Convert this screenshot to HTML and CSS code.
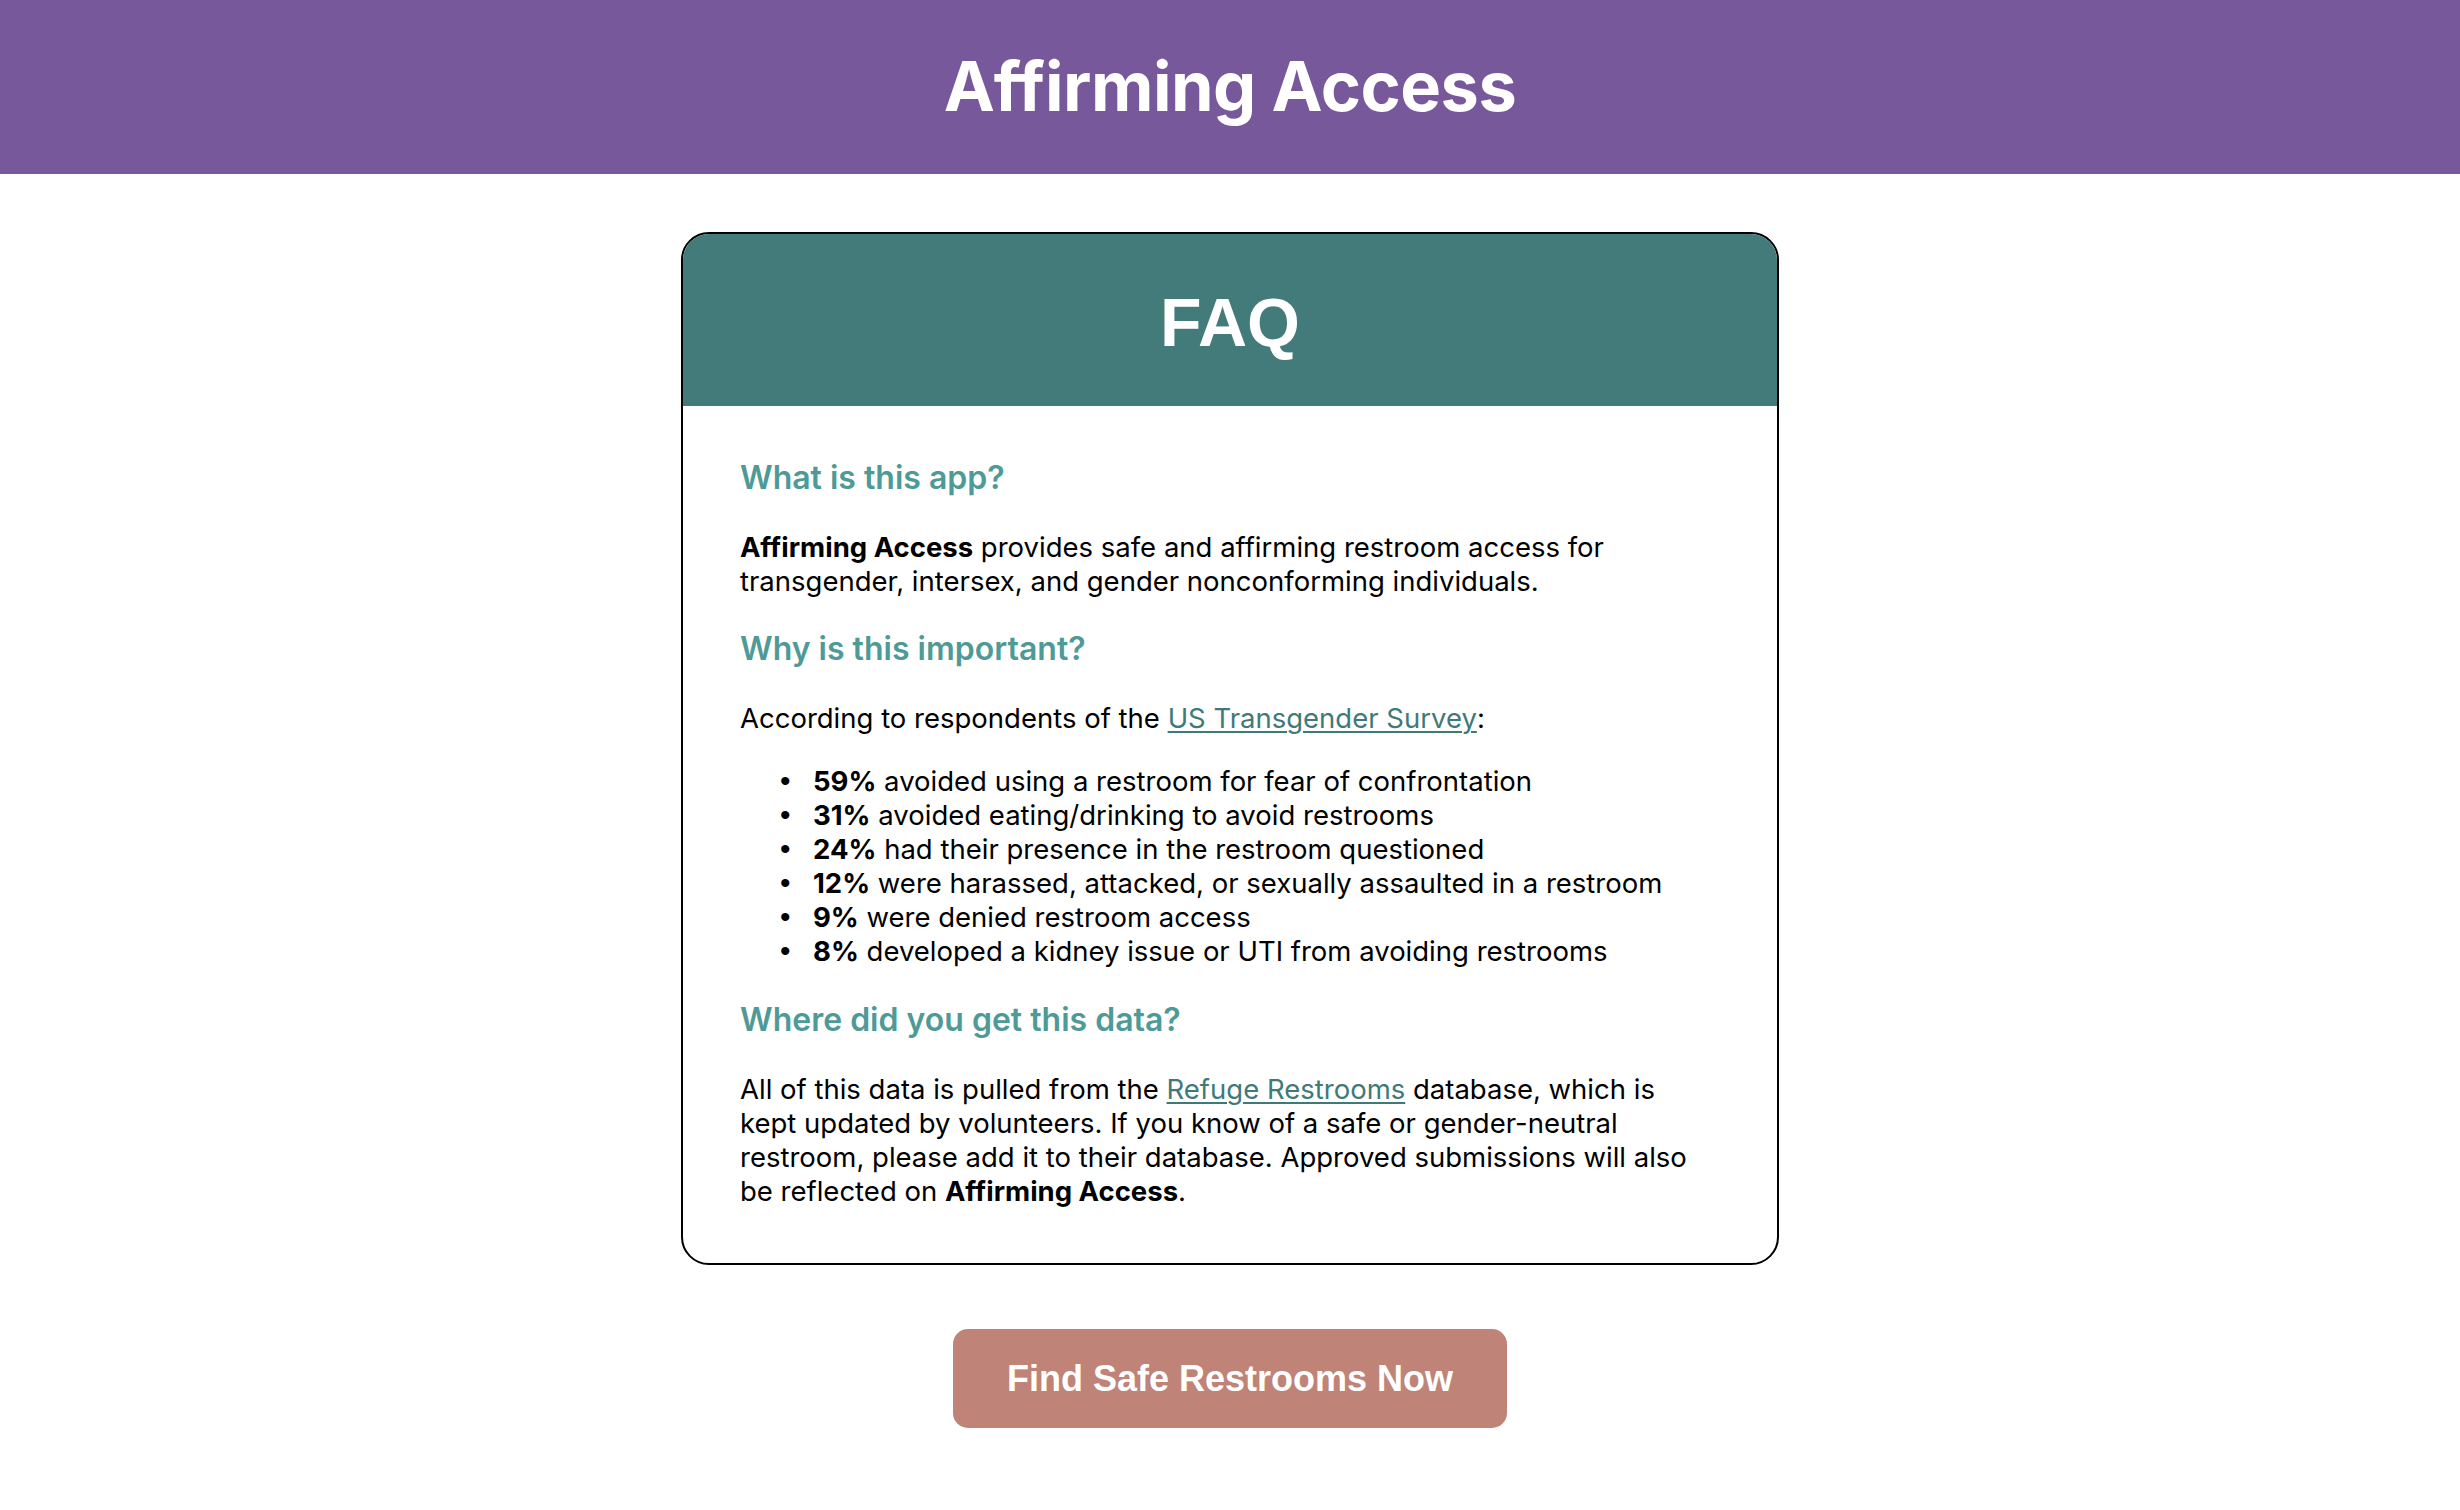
FILE: index.html
```html
<!DOCTYPE html>
<html lang="en">
<head>
<meta charset="utf-8">
<title>Affirming Access</title>
<link rel="stylesheet" href="styles.css">
</head>
<body>
<header class="site-header">
  <h1 class="site-title">Affirming Access</h1>
</header>
<main class="main">
  <section class="card">
    <div class="card-head">
      <h2 class="card-title">FAQ</h2>
    </div>
    <div class="card-body">
      <h3 class="q">What is this app?</h3>
      <p class="a"><strong>Affirming Access</strong> provides safe and affirming restroom access for transgender, intersex, and gender nonconforming individuals.</p>
      <h3 class="q">Why is this important?</h3>
      <p class="a tight">According to respondents of the <a href="#">US Transgender Survey</a>:</p>
      <ul class="stats">
        <li><strong>59%</strong> avoided using a restroom for fear of confrontation</li>
        <li><strong>31%</strong> avoided eating/drinking to avoid restrooms</li>
        <li><strong>24%</strong> had their presence in the restroom questioned</li>
        <li><strong>12%</strong> were harassed, attacked, or sexually assaulted in a restroom</li>
        <li><strong>9%</strong> were denied restroom access</li>
        <li><strong>8%</strong> developed a kidney issue or UTI from avoiding restrooms</li>
      </ul>
      <h3 class="q">Where did you get this data?</h3>
      <p class="a last">All of this data is pulled from the <a href="#">Refuge Restrooms</a> database, which is kept updated by volunteers. If you know of a safe or gender-neutral restroom, please add it to their database. Approved submissions will also be reflected on <strong>Affirming Access</strong>.</p>
    </div>
  </section>
  <a class="cta" href="#">Find Safe Restrooms Now</a>
</main>
</body>
</html>
```

FILE: styles.css
```css
* { box-sizing: border-box; }

html, body {
  margin: 0;
  padding: 0;
  background: #ffffff;
}

body {
  font-family: Inter, "Noto Sans", sans-serif;
  color: #000;
}

.site-header {
  background: #77589b;
  height: 174px;
  display: flex;
  align-items: center;
  justify-content: center;
}

.site-title {
  margin: 0;
  color: #fff;
  font-family: Inter, sans-serif;
  font-weight: 700;
  font-size: 68.5px;
  letter-spacing: -0.5px;
  line-height: 1;
}

.main {
  display: flex;
  flex-direction: column;
  align-items: center;
  padding-top: 58px;
}

.card {
  width: 1098px;
  border: 2px solid #000;
  border-radius: 28px;
  overflow: hidden;
  background: #fff;
}

.card-head {
  background: #437b7b;
  height: 172px;
  display: flex;
  align-items: center;
  justify-content: center;
  padding-top: 4px;
}

.card-title {
  margin: 0;
  color: #fff;
  font-family: "Liberation Sans", Arial, sans-serif;
  font-weight: 700;
  font-size: 68px;
  line-height: 1;
}

.card-body {
  padding: 52px 70px 55px 57px;
}

.q {
  margin: 0 0 32px;
  color: #4e9a97;
  font-weight: 600;
  font-size: 32px;
  line-height: 40px;
}

.a {
  margin: 0 0 31px;
  font-size: 27.5px;
  line-height: 34px;
}

.a.tight { margin-bottom: 29px; }
.a.last { margin-bottom: 0; }

.a strong, .stats strong { font-weight: 700; }

.a a {
  color: #3f7a78;
  text-decoration: underline;
  text-underline-offset: 3px;
  text-decoration-thickness: 1.5px;
}

.stats {
  margin: 0 0 32px;
  padding-left: 73px;
  font-size: 27.5px;
  line-height: 34px;
}

.stats li {
  height: 34px;
}

.stats li::marker {
  content: "\2022\2002\2005";
  font-family: "Liberation Sans", Arial, sans-serif;
  font-size: 30px;
}

.cta {
  margin-top: 64px;
  display: inline-block;
  background: #bf8377;
  color: #fff;
  text-decoration: none;
  font-family: "Liberation Sans", Arial, sans-serif;
  font-weight: 700;
  font-size: 36px;
  height: 99px;
  line-height: 99px;
  padding: 0 54px;
  border-radius: 15px;
}
```
